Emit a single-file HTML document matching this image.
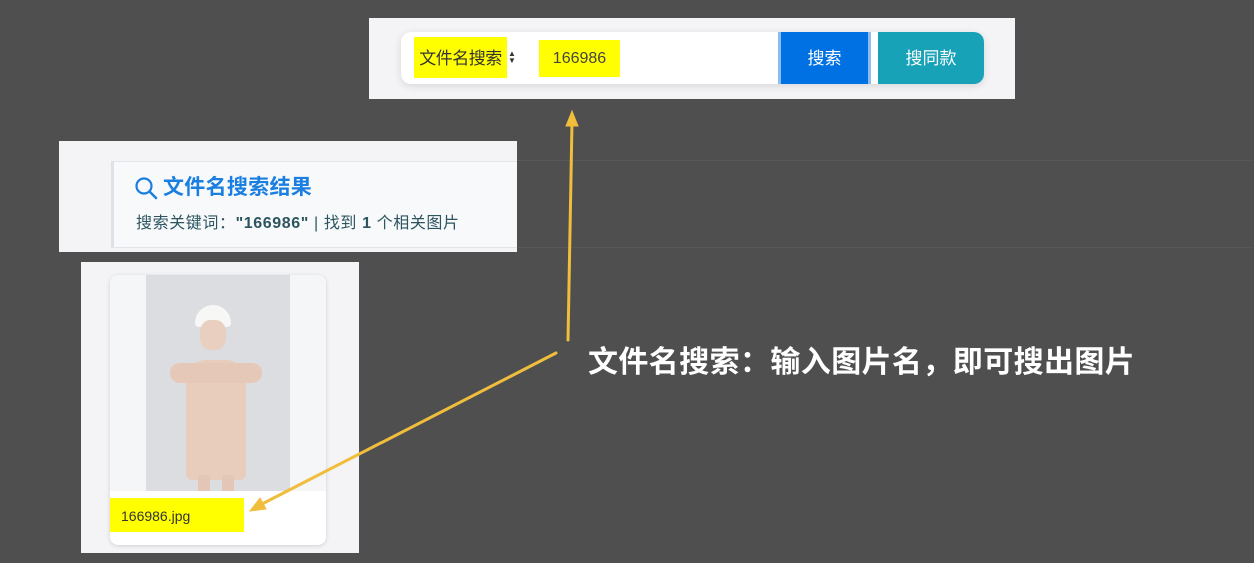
<!DOCTYPE html>
<html><head><meta charset="utf-8"><style>
body{margin:0;width:1254px;height:563px;background:#4f4f4f;position:relative;overflow:hidden;font-family:"Liberation Sans","Noto Sans CJK SC",sans-serif}
.a{position:absolute}
</style></head><body>
<div class="a" style="left:517px;top:160px;width:737px;height:1px;background:#575757"></div>
<div class="a" style="left:517px;top:247px;width:737px;height:1px;background:#575757"></div>
<!-- search panel -->
<div class="a" style="left:369px;top:18px;width:646px;height:81px;background:#f4f4f6"></div>
<div class="a" style="left:401px;top:32px;width:583px;height:52px;background:#fff;border-radius:10px;box-shadow:0 2px 8px rgba(0,0,0,.12)"></div>
<div class="a" style="left:414px;top:37px;width:93px;height:41px;background:#ffff00;font-size:17px;line-height:43px;color:#333;text-align:center;letter-spacing:-0.5px">文件名搜索</div>
<div class="a" style="left:508px;top:50px;font-size:8px;line-height:7px;color:#333">▲<br>▼</div>
<div class="a" style="left:539px;top:40px;width:81px;height:37px;background:#ffff00;font-size:16px;line-height:38px;color:#444;text-align:center">166986</div>
<div class="a" style="left:778px;top:32px;width:93px;height:52px;background:#0071e3;border-left:3px solid #8cbcf0;border-right:3px solid #8cbcf0;box-sizing:border-box;color:#fff;font-size:17px;line-height:54px;text-align:center">搜索</div>
<div class="a" style="left:878px;top:32px;width:106px;height:52px;background:#17a2b8;border-radius:0 10px 10px 0;color:#fff;font-size:17px;line-height:54px;text-align:center">搜同款</div>
<!-- result panel -->
<div class="a" style="left:59px;top:141px;width:458px;height:111px;background:#f4f4f6"></div>
<div class="a" style="left:111px;top:161px;width:406px;height:87px;background:#f7f9fb;border-left:3px solid #dde2e8;border-top:1px solid #e2e6ea;border-bottom:1px solid #e2e6ea;box-sizing:border-box"></div>
<svg class="a" style="left:134px;top:176px" width="26" height="26" viewBox="0 0 26 26"><circle cx="10" cy="10" r="7.5" fill="none" stroke="#1a7fe0" stroke-width="2.2"/><path d="M15.5 15.5L22 22" stroke="#1a7fe0" stroke-width="2.6" stroke-linecap="round"/></svg>
<div class="a" style="left:163px;top:174px;font-size:21px;font-weight:bold;color:#1a7fe0;line-height:28px;letter-spacing:0.3px">文件名搜索结果</div>
<div class="a" style="left:136px;top:213px;font-size:16px;color:#2d5560;line-height:22px;letter-spacing:0.6px;white-space:nowrap">搜索关键词：<b>"166986"</b> | 找到 <b>1</b> 个相关图片</div>
<!-- image panel -->
<div class="a" style="left:81px;top:262px;width:278px;height:291px;background:#f4f4f6"></div>
<div class="a" style="left:110px;top:275px;width:216px;height:270px;background:#fff;border-radius:8px;box-shadow:0 1px 4px rgba(0,0,0,.15);overflow:hidden">
<div class="a" style="left:0;top:0;width:216px;height:216px;background:#f5f6f8"></div>
<div class="a" style="left:36px;top:0;width:144px;height:216px;background:#dcdde0"></div>
<div class="a" style="left:85px;top:30px;width:36px;height:22px;background:#f7f7f5;border-radius:18px 18px 4px 4px"></div>
<div class="a" style="left:90px;top:45px;width:26px;height:30px;background:#e8cfc0;border-radius:40%"></div>
<div class="a" style="left:76px;top:85px;width:60px;height:120px;background:#e8ccbc;border-radius:20px 20px 6px 6px"></div>
<div class="a" style="left:60px;top:88px;width:92px;height:20px;background:#e6c8b8;border-radius:10px"></div>
<div class="a" style="left:88px;top:200px;width:12px;height:16px;background:#e4c6b8"></div>
<div class="a" style="left:112px;top:200px;width:12px;height:16px;background:#e4c6b8"></div>
</div>
<div class="a" style="left:110px;top:498px;width:134px;height:34px;background:#ffff00;font-size:14px;line-height:36px;color:#333;padding-left:11px;box-sizing:border-box">166986.jpg</div>
<!-- arrows -->
<svg class="a" style="left:0;top:0" width="1254" height="563">
<g stroke="#f0bd3c" stroke-width="3" fill="#f0bd3c" stroke-linecap="round">
<line x1="568" y1="340" x2="572" y2="122"/>
<path d="M572 111L566 126L578 126Z" stroke-width="1"/>
<line x1="556" y1="353" x2="262" y2="504"/>
<path d="M250 511L266 509L260 498Z" stroke-width="1"/>
</g></svg>
<div class="a" style="left:588px;top:343px;font-size:30px;font-weight:bold;color:#fff;line-height:40px;letter-spacing:0.4px;white-space:nowrap">文件名搜索：输入图片名，即可搜出图片</div>
</body></html>
